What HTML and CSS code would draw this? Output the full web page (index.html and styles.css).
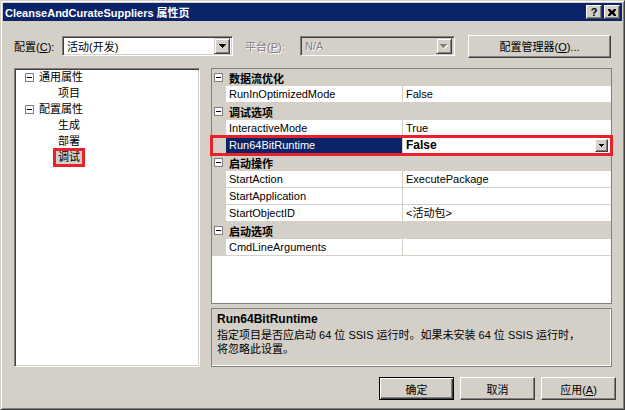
FILE: index.html
```html
<!DOCTYPE html>
<html lang="zh-CN">
<head>
    <meta charset="UTF-8">
    <title>CleanseAndCurateSuppliers 属性页</title>
    <link rel="stylesheet" href="styles.css">
</head>
<body>
    <div class="window">
        <div class="titlebar">
            <span class="title">CleanseAndCurateSuppliers 属性页</span>
            <div class="caption-btns">
                <span class="cap-btn help">?</span>
                <span class="cap-btn">
                    <svg width="8" height="7" viewBox="0 0 8 7"><path d="M0 0h2l2 2 2-2h2v1l-2 2.5 2 2.5v1h-2l-2-2-2 2h-2v-1l2-2.5-2-2.5z"/></svg>
                </span>
            </div>
        </div>

        <div class="content">
            <div class="config-row">
                <label class="cfg-label">配置(<u>C</u>):</label>
                <div class="combo combo-config">
                    <span class="combo-text">活动(开发)</span>
                    <span class="drop-btn">
                        <svg width="7" height="4"><path d="M0 0h7v1h-1v1h-1v1h-1v1h-1v-1h-1v-1h-1v-1h-1z"/></svg>
                    </span>
                </div>
                <label class="cfg-label disabled platform-label">平台(<u>P</u>):</label>
                <div class="combo combo-platform disabled">
                    <span class="combo-text">N/A</span>
                    <span class="drop-btn">
                        <svg width="8" height="5"><path class="arrow-shadow" d="M1 1h7v1h-1v1h-1v1h-1v1h-1v-1h-1v-1h-1v-1h-1z"/><path class="arrow-dim" d="M0 0h7v1h-1v1h-1v1h-1v1h-1v-1h-1v-1h-1v-1h-1z"/></svg>
                    </span>
                </div>
                <button class="btn btn-manager">配置管理器(<u>O</u>)...</button>
            </div>

            <div class="main">
                <div class="tree">
                    <div class="tree-row">
                        <span class="expander"></span>通用属性
                    </div>
                    <div class="tree-row child">项目</div>
                    <div class="tree-row">
                        <span class="expander"></span>配置属性
                    </div>
                    <div class="tree-row child">生成</div>
                    <div class="tree-row child">部署</div>
                    <div class="tree-row child"><span class="tree-selected">调试</span></div>
                </div>

                <div class="right">
                    <div class="grid">
                        <div class="cat-row"><span class="expander"></span>数据流优化</div>
                        <div class="prop-row">
                            <span class="prop-name">RunInOptimizedMode</span>
                            <span class="prop-value">False</span>
                        </div>
                        <div class="cat-row"><span class="expander"></span>调试选项</div>
                        <div class="prop-row">
                            <span class="prop-name">InteractiveMode</span>
                            <span class="prop-value">True</span>
                        </div>
                        <div class="prop-row selected">
                            <span class="prop-name">Run64BitRuntime</span>
                            <span class="prop-value">
                                <b>False</b>
                                <span class="value-drop">
                                    <svg width="5" height="3"><path d="M0 0h5v1h-1v1h-1v1h-1v-1h-1v-1h-1z"/></svg>
                                </span>
                            </span>
                        </div>
                        <div class="cat-row"><span class="expander"></span>启动操作</div>
                        <div class="prop-row">
                            <span class="prop-name">StartAction</span>
                            <span class="prop-value">ExecutePackage</span>
                        </div>
                        <div class="prop-row">
                            <span class="prop-name">StartApplication</span>
                            <span class="prop-value"></span>
                        </div>
                        <div class="prop-row">
                            <span class="prop-name">StartObjectID</span>
                            <span class="prop-value">&lt;活动包&gt;</span>
                        </div>
                        <div class="cat-row"><span class="expander"></span>启动选项</div>
                        <div class="prop-row">
                            <span class="prop-name">CmdLineArguments</span>
                            <span class="prop-value"></span>
                        </div>
                        <div class="grid-fill"></div>
                    </div>

                    <div class="desc">
                        <div class="desc-title">Run64BitRuntime</div>
                        <p class="desc-text">指定项目是否应启动 64 位 SSIS 运行时。如果未安装 64 位 SSIS 运行时，<br>将忽略此设置。</p>
                    </div>
                </div>
            </div>

            <div class="buttons">
                <button class="btn btn-default">确定</button>
                <button class="btn">取消</button>
                <button class="btn">应用(<u>A</u>)</button>
            </div>
        </div>
    </div>
</body>
</html>
```

FILE: styles.css
```css
* {
    margin: 0;
    padding: 0;
    box-sizing: border-box;
}

html, body {
    width: 625px;
    height: 410px;
    overflow: hidden;
    background: #d4d0c8;
}

body {
    font-family: "Liberation Sans", "Noto Sans CJK SC", sans-serif;
    font-size: 11px;
    color: #000;
}

/* classic 3D dialog frame */
.window {
    width: 625px;
    height: 410px;
    background: #d4d0c8;
    border: 1px solid;
    border-color: #d4d0c8 #404040 #404040 #d4d0c8;
    box-shadow: inset 1px 1px #fff, inset -1px -1px #808080;
    padding: 2px;
    display: flex;
    flex-direction: column;
}

.titlebar {
    height: 18px;
    background: #0a246a;
    display: flex;
    align-items: center;
    padding: 0 2px 0 2px;
}

.title {
    color: #fff;
    font-weight: bold;
    font-size: 11px;
}

.caption-btns {
    margin-left: auto;
    display: flex;
    gap: 2px;
}

.cap-btn {
    width: 16px;
    height: 14px;
    background: #d4d0c8;
    border: 1px solid;
    border-color: #fff #404040 #404040 #fff;
    box-shadow: inset -1px -1px #808080;
    display: flex;
    align-items: center;
    justify-content: center;
    font-weight: bold;
    font-size: 11px;
    line-height: 12px;
}

.content {
    flex: 1;
    display: flex;
    flex-direction: column;
    padding: 14px 10px 7px 11px;
}

/* configuration row */
.config-row {
    height: 22px;
    display: flex;
    align-items: center;
}

.cfg-label {
    width: 48px;
}

.cfg-label.disabled {
    color: #808080;
    text-shadow: 1px 1px #fff;
}

.platform-label {
    width: 55px;
    margin-left: 12px;
}

.combo {
    height: 20px;
    background: #fff;
    border: 1px solid;
    border-color: #808080 #fff #fff #808080;
    box-shadow: inset 1px 1px #404040, inset -1px -1px #d4d0c8;
    padding: 2px;
    display: flex;
    align-items: center;
}

.combo-config {
    width: 171px;
}

.combo-platform {
    width: 155px;
    background: #d4d0c8;
}

.combo-text {
    flex: 1;
    padding-left: 2px;
}

.combo.disabled .combo-text {
    color: #808080;
    text-shadow: 1px 1px #fff;
}

.drop-btn {
    width: 16px;
    height: 16px;
    background: #d4d0c8;
    border: 1px solid;
    border-color: #d4d0c8 #404040 #404040 #d4d0c8;
    box-shadow: inset 1px 1px #fff, inset -1px -1px #808080;
    display: flex;
    align-items: center;
    justify-content: center;
}

.drop-btn svg {
    display: block;
}

.arrow-dim {
    fill: #808080;
}

.arrow-shadow {
    fill: #fff;
}

.btn {
    width: 75px;
    height: 23px;
    background: #d4d0c8;
    border: 1px solid;
    border-color: #fff #404040 #404040 #fff;
    box-shadow: inset -1px -1px #808080;
    font: inherit;
    color: #000;
}

.btn-manager {
    width: 143px;
    margin-left: 13px;
}

.btn-default {
    border: 1px solid #000;
    box-shadow: inset 1px 1px #fff, inset -1px -1px #404040, inset -2px -2px #808080;
}

/* tree + property pages */
.main {
    flex: 1;
    display: flex;
    gap: 11px;
    margin-top: 11px;
}

.tree {
    width: 186px;
    background: #fff;
    border: 1px solid;
    border-color: #808080 #fff #fff #808080;
    box-shadow: inset 1px 1px #404040, inset -1px -1px #d4d0c8;
    padding: 0 1px;
}

.tree-row {
    height: 16px;
    line-height: 16px;
    display: flex;
    align-items: center;
    padding-left: 9px;
    white-space: nowrap;
}

.tree-row:first-child {
    margin-top: 0;
}

.tree-row.child {
    padding-left: 42px;
}

.expander {
    width: 9px;
    height: 9px;
    border: 1px solid #808080;
    background: #fff;
    margin-right: 5px;
    position: relative;
    flex: none;
}

.expander::after {
    content: "";
    position: absolute;
    left: 1px;
    top: 3px;
    width: 5px;
    height: 1px;
    background: #000;
}

.tree-selected {
    display: inline-block;
    height: 13px;
    line-height: 13px;
    padding: 0 2px;
    margin-left: -2px;
    background: #d4d0c8;
    outline: 3px solid #e8212b;
}

.right {
    width: 401px;
    display: flex;
    flex-direction: column;
    gap: 4px;
}

.grid {
    height: 236px;
    border: 1px solid #808080;
    background: #fff;
    display: flex;
    flex-direction: column;
}

.cat-row {
    height: 17px;
    background: #d4d0c8;
    display: flex;
    align-items: center;
    padding-left: 2px;
    font-weight: bold;
    white-space: nowrap;
}

.cat-row .expander {
    margin-right: 6px;
}

.prop-row {
    height: 17px;
    display: flex;
    background: #d4d0c8;
    padding-left: 14px;
}

.prop-name,
.prop-value {
    background: #fff;
    border-bottom: 1px solid #d4d0c8;
    height: 17px;
    line-height: 16px;
    white-space: nowrap;
}

.prop-name {
    width: 177px;
    padding-left: 3px;
    border-right: 1px solid #d4d0c8;
}

.prop-value {
    flex: 1;
    padding-left: 3px;
    display: flex;
    align-items: center;
}

.prop-row.selected {
    outline: 3px solid #e8212b;
    outline-offset: -1px;
    position: relative;
}

.prop-row.selected .prop-name {
    background: #0a246a;
    color: #fff;
}

.prop-value b {
    font-size: 12px;
}

.value-drop {
    margin-left: auto;
    margin-right: 3px;
    width: 13px;
    height: 13px;
    background: #d4d0c8;
    border: 1px solid;
    border-color: #fff #404040 #404040 #fff;
    box-shadow: inset -1px -1px #808080;
    display: flex;
    align-items: center;
    justify-content: center;
}

.value-drop svg {
    display: block;
}

.grid-fill {
    flex: 1;
    background: #fff;
}

.desc {
    flex: 1;
    border: 1px solid #808080;
    box-shadow: inset -1px -1px #fff;
    padding: 3px 5px;
}

.desc-title {
    font-weight: bold;
    font-size: 12px;
    line-height: 14px;
    margin-bottom: 2px;
}

.desc-text {
    line-height: 14px;
}

.buttons {
    display: flex;
    justify-content: flex-end;
    gap: 6px;
    margin-top: 10px;
    margin-right: -4px;
}
```
